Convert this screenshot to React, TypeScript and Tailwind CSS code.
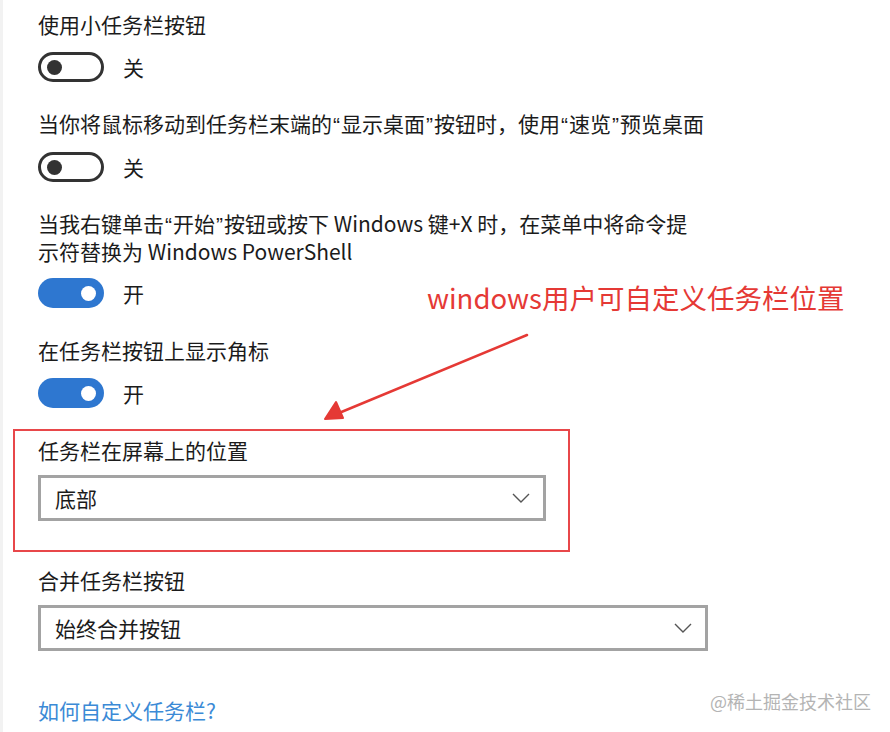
import React from 'react';

const font = { fontFamily: '"Noto Sans CJK SC", "Noto Sans", sans-serif' };

// narrow western quotes, as in the Windows settings font
const Q: React.FC<{ children: React.ReactNode }> = ({ children }) => (
  <span className="font-['Liberation_Sans'] leading-none px-[1px]">{children}</span>
);

const Toggle: React.FC<{ on: boolean }> = ({ on }) => (
  <div className="flex items-center gap-[19px]">
    {on ? (
      <div className="w-[66px] h-[30px] rounded-full bg-[#2e77d0] flex items-center justify-end pr-[8px]">
        <div className="w-[15px] h-[15px] rounded-full bg-white" />
      </div>
    ) : (
      <div className="w-[66px] h-[30px] rounded-full border-[3px] border-[#333333] flex items-center pl-[6px]">
        <div className="w-[15px] h-[15px] rounded-full bg-[#333333]" />
      </div>
    )}
    <span className="text-[21px] leading-[28px] text-[#1b1b1b]">{on ? '开' : '关'}</span>
  </div>
);

const Select: React.FC<{ value: string; width: string }> = ({ value, width }) => (
  <div className={`${width} h-[46px] border-[3px] border-[#a3a3a3] bg-white flex items-center justify-between pl-[14px] pr-[13px]`}>
    <span className="text-[21px] leading-[28px] text-[#1b1b1b]">{value}</span>
    <svg width="18" height="10" viewBox="0 0 18 10" fill="none">
      <path d="M1 1 L9 9 L17 1" stroke="#555555" strokeWidth="1.4" />
    </svg>
  </div>
);

const App: React.FC = () => {
  return (
    <div className="relative w-[890px] h-[732px] overflow-hidden bg-white border-l-[3px] border-[#f2f2f2]" style={font}>
      <div className="pl-[35px] pt-[10px] flex flex-col items-start text-[#1b1b1b]">
        <p className="text-[21px] leading-[28px]">使用小任务栏按钮</p>
        <div className="mt-[14px]"><Toggle on={false} /></div>

        <p className="mt-[27px] text-[21px] leading-[28px] whitespace-nowrap">
          当你将鼠标移动到任务栏末端的<Q>“</Q>显示桌面<Q>”</Q>按钮时，使用<Q>“</Q>速览<Q>”</Q>预览桌面
        </p>
        <div className="mt-[15px]"><Toggle on={false} /></div>

        <p className="mt-[27px] text-[21px] leading-[28px] whitespace-nowrap">
          当我右键单击<Q>“</Q>开始<Q>”</Q>按钮或按下 Windows 键+X 时，在菜单中将命令提<br />示符替换为 Windows PowerShell
        </p>
        <div className="mt-[13px]"><Toggle on={true} /></div>

        <p className="mt-[28px] text-[21px] leading-[28px]">在任务栏按钮上显示角标</p>
        <div className="mt-[14px]"><Toggle on={true} /></div>

        <div className="mt-[21px] ml-[-25px] w-[557px] border-2 border-[#e8474a] pl-[23px] pt-[5px] pb-[29px]">
          <p className="text-[21px] leading-[28px]">任务栏在屏幕上的位置</p>
          <div className="mt-[11px]">
            <Select value="底部" width="w-[508px]" />
          </div>
        </div>

        <p className="mt-[14px] text-[21px] leading-[28px]">合并任务栏按钮</p>
        <div className="mt-[11px]">
          <Select value="始终合并按钮" width="w-[670px]" />
        </div>

        <p className="mt-[45px] text-[21px] leading-[28px] text-[#3b8ad6]">如何自定义任务栏?</p>
      </div>

      {/* annotation */}
      <p className="absolute left-[424px] top-[279px] text-[27.5px] leading-[36px] text-[#e53935] whitespace-nowrap">
        windows用户可自定义任务栏位置
      </p>
      <svg className="absolute left-0 top-0" width="890" height="732" viewBox="0 0 890 732" fill="none">
        <line x1="524" y1="335" x2="336" y2="413" stroke="#e53935" strokeWidth="2.5" strokeLinecap="round" />
        <path d="M322 419 L333 402 L340 418 Z" fill="#e53935" stroke="#e53935" strokeWidth="2" strokeLinejoin="round" />
      </svg>

      <span className="absolute left-[707px] top-[689px] text-[18px] leading-[24px] text-[#b4b4b4] whitespace-nowrap">
        @稀土掘金技术社区
      </span>
    </div>
  );
};

export default App;
